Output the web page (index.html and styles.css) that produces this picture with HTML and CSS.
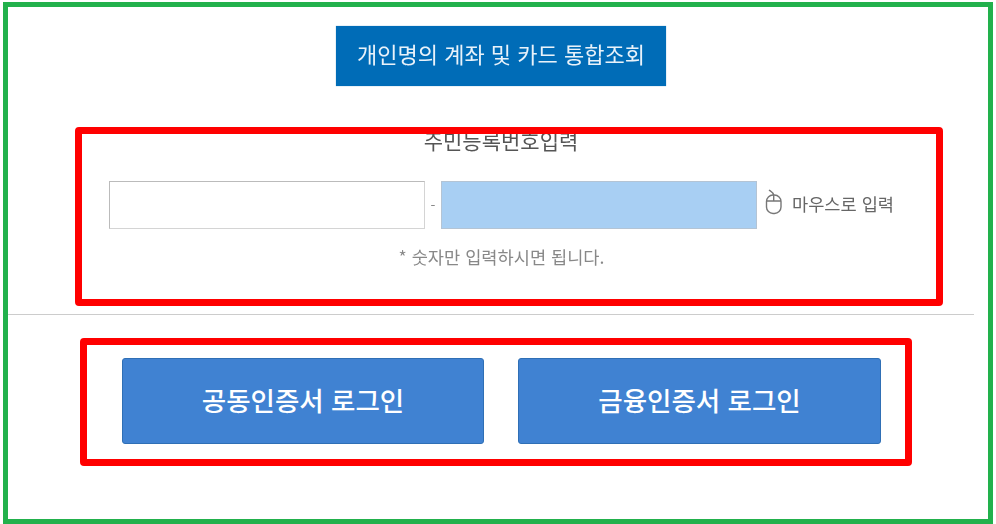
FILE: index.html
```html
<!DOCTYPE html>
<html lang="ko">
<head>
    <meta charset="UTF-8">
    <title>개인명의 계좌 및 카드 통합조회</title>
    <link rel="stylesheet" href="styles.css">
</head>
<body>
    <div class="frame">
        <button class="lookup-btn">개인명의 계좌 및 카드 통합조회</button>

        <div class="id-box">
            <h4 class="id-title">주민등록번호입력</h4>
            <div class="id-row">
                <input type="text" class="id-input">
                <span class="dash">-</span>
                <input type="text" class="id-input filled">
                <span class="mouse-input">
                    <svg class="mouse-icon" width="20" height="26" viewBox="0 0 20 26" fill="none" stroke="#777" stroke-width="1.4">
                        <path d="M5 1 C7 2.5 9.5 3.5 9.5 6"/>
                        <rect x="2.5" y="6" width="14.5" height="18.5" rx="6.5"/>
                        <path d="M2.5 12 H17 M9.7 6 V12"/>
                    </svg>
                    마우스로 입력
                </span>
            </div>
            <p class="id-note">* 숫자만 입력하시면 됩니다.</p>
        </div>

        <hr class="divider">

        <div class="login-box">
            <button class="login-btn">공동인증서 로그인</button>
            <button class="login-btn">금융인증서 로그인</button>
        </div>
    </div>
</body>
</html>
```

FILE: styles.css
```css
html, body {
    margin: 0;
    background: #fff;
}
body {
    width: 996px;
    height: 524px;
    padding: 2px 3px 0 3px;
    box-sizing: border-box;
    overflow: hidden;
    font-family: "Noto Sans CJK KR", "Liberation Sans", sans-serif;
}
.frame {
    height: 522px;
    box-sizing: border-box;
    border: 5px solid #22b14c;
    display: flex;
    flex-direction: column;
    align-items: flex-start;
    filter: blur(0.35px);
}
.lookup-btn {
    width: 330px;
    height: 60px;
    margin: 19px 0 0 328px;
    padding: 0 0 6px 0;
    border: none;
    background: #006cb7;
    color: #e8f2fa;
    font-family: inherit;
    font-size: 22px;
    box-shadow: 0 0 1px #7aa9d0;
}
.id-box {
    width: 868px;
    height: 179px;
    margin: 41px 0 0 67px;
    box-sizing: border-box;
    border: 7px solid #f00;
    border-radius: 4px;
    overflow: hidden;
    background: #fff;
}
.id-title {
    margin: -7px 0 0 0;
    padding-right: 16px;
    text-align: center;
    font-size: 21px;
    font-weight: 400;
    line-height: 26px;
    color: #555;
}
.id-row {
    display: flex;
    align-items: center;
    margin: 28px 0 0 27px;
}
.id-input {
    width: 316px;
    height: 48px;
    padding: 0;
    box-sizing: border-box;
    border: 1px solid #d4d4d4;
    border-top-color: #bbb;
    border-left-color: #bbb;
    background: #fff;
}
.id-input.filled {
    background: #a8cff3;
    border-color: #b4c4d4;
}
.dash {
    width: 16px;
    text-align: center;
    font-size: 14px;
    color: #888;
}
.mouse-input {
    display: flex;
    align-items: center;
    margin-left: 7px;
    padding-bottom: 4px;
    font-size: 17.6px;
    color: #666;
    white-space: nowrap;
}
.mouse-icon {
    margin-right: 8px;
    margin-bottom: 2px;
}
.id-note {
    margin: 16px 0 0 0;
    padding-right: 15px;
    text-align: center;
    font-size: 17.6px;
    line-height: 24px;
    color: #888;
}
.divider {
    width: 966px;
    margin: 8px 0 0 0;
    border: none;
    border-top: 1px solid #ccc;
}
.login-box {
    width: 832px;
    height: 128px;
    margin-top: 23px;
    margin-left: 72px;
    box-sizing: border-box;
    border: 7px solid #f00;
    border-radius: 4px;
    display: flex;
    gap: 34px;
    padding: 13px 0 0 35px;
}
.login-btn {
    width: 362px;
    height: 86px;
    padding: 0 0 4px 0;
    border: 1px solid #2f6fb5;
    border-radius: 3px;
    background: #4082d2;
    color: #fff;
    font-family: inherit;
    font-size: 26.5px;
    font-weight: 500;
}
.login-btn:last-child {
    width: 363px;
}
```
